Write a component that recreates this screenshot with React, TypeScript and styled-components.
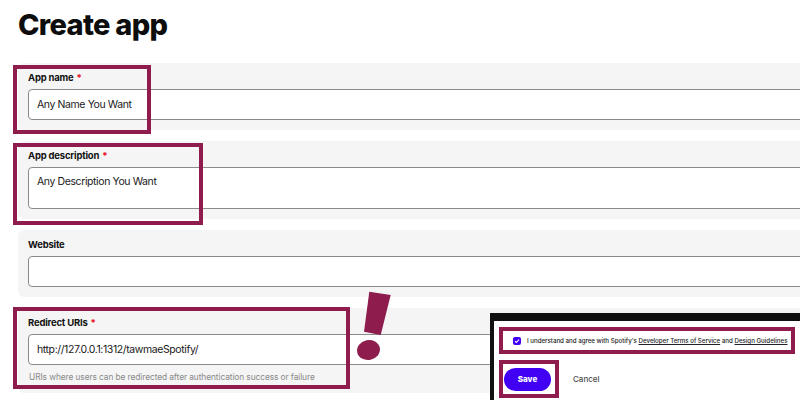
import * as React from 'react'
import styled, { createGlobalStyle } from 'styled-components'

const maroon = '#8e1c4c'
const violet = '#4100f4'

const GlobalStyle = createGlobalStyle`
  html, body {
    margin: 0;
    padding: 0;
    background: #ffffff;
    overflow: hidden;
  }
  body {
    font-family: Inter, 'Noto Sans', 'DejaVu Sans', sans-serif;
    color: #121212;
  }
`

const Page = styled.div`
  position: relative;
  width: 800px;
  height: 400px;
  overflow: hidden;
`

const Title = styled.h1`
  margin: 0;
  padding: 8px 0 0 18px;
  font-size: 29px;
  line-height: 34px;
  font-weight: 800;
  letter-spacing: -0.7px;
  color: #0d0d0d;
`

const Form = styled.div`
  display: flex;
  flex-direction: column;
  gap: 11px;
  margin: 21px -60px 0 18px;
`

const Panel = styled.div`
  position: relative;
  display: flex;
  flex-direction: column;
  background: #f5f5f5;
  border-radius: 6px;
  padding: 8px 10px 10px;
`

const Label = styled.label`
  font-size: 9.5px;
  line-height: 14px;
  font-weight: 700;
  letter-spacing: -0.2px;
  color: #121212;
  margin-bottom: 4px;
`

const Required = styled.span`
  color: #e91429;
  margin-left: 3px;
`

const TextInput = styled.div<{ $tall?: boolean }>`
  box-sizing: border-box;
  height: ${({ $tall }) => ($tall ? '42px' : '31px')};
  background: #ffffff;
  border: 1px solid #8a8a8a;
  border-radius: 4px;
  padding: 0 8px;
  display: flex;
  align-items: ${({ $tall }) => ($tall ? 'flex-start' : 'center')};
  padding-top: ${({ $tall }) => ($tall ? '7px' : '0')};
  font-size: 10.5px;
  letter-spacing: -0.4px;
  line-height: 14px;
  color: #1a1a1a;
`

const Helper = styled.div`
  margin-top: 6px;
  padding-left: 1px;
  font-size: 8.4px;
  letter-spacing: -0.1px;
  line-height: 12px;
  color: #8a8a8a;
`

const Highlight = styled.div<{ $left: number; $top: number; $w: number; $h: number }>`
  position: absolute;
  left: ${({ $left }) => $left}px;
  top: ${({ $top }) => $top}px;
  width: ${({ $w }) => $w}px;
  height: ${({ $h }) => $h}px;
  box-sizing: border-box;
  border: 4px solid ${maroon};
  pointer-events: none;
`

const Bang = styled.svg`
  position: absolute;
  left: 355px;
  top: 288px;
  width: 40px;
  height: 76px;
`

const ConsentWindow = styled.div`
  position: absolute;
  left: 490px;
  top: 313px;
  right: 0;
  bottom: 0;
  background: #ffffff;
  border-top: 8px solid #111111;
  border-left: 4px solid #111111;
  padding: 6px 5px 0 5px;
  display: flex;
  flex-direction: column;
  gap: 6px;
`

const TermsBox = styled.div`
  box-sizing: border-box;
  width: 296px;
  height: 27px;
  border: 4px solid ${maroon};
  display: flex;
  align-items: center;
  gap: 6px;
  padding-left: 10px;
  font-size: 6.2px;
  letter-spacing: -0.02px;
  font-weight: 500;
  color: #222222;
  white-space: nowrap;
`

const Check = styled.span`
  width: 8px;
  height: 8px;
  border-radius: 2px;
  background: ${violet};
  display: flex;
  align-items: center;
  justify-content: center;
  flex: none;
`

const TermsLink = styled.span`
  text-decoration: underline;
  text-underline-offset: 1px;
`

const Actions = styled.div`
  display: flex;
  align-items: center;
`

const SaveBox = styled.div`
  box-sizing: border-box;
  width: 60px;
  height: 38px;
  border: 4px solid ${maroon};
  padding-left: 1px;
  display: flex;
  align-items: center;
`

const SaveButton = styled.button`
  width: 47px;
  height: 23px;
  border: none;
  border-radius: 12px;
  background: ${violet};
  color: #ffffff;
  font-family: inherit;
  font-size: 8px;
  font-weight: 800;
  padding: 0;
`

const CancelButton = styled.span`
  margin-left: 14px;
  font-size: 8px;
  font-weight: 500;
  color: #4d4d4d;
`

export default function App() {
  return (
    <Page>
      <GlobalStyle />
      <Title>Create app</Title>
      <Form>
        <Panel>
          <Label>
            App name<Required>*</Required>
          </Label>
          <TextInput>Any Name You Want</TextInput>
          <Highlight $left={-5} $top={2} $w={138} $h={69} />
        </Panel>
        <Panel>
          <Label>
            App description<Required>*</Required>
          </Label>
          <TextInput $tall>Any Description You Want</TextInput>
          <Highlight $left={-5} $top={2} $w={190} $h={82} />
        </Panel>
        <Panel>
          <Label>Website</Label>
          <TextInput />
        </Panel>
        <Panel>
          <Label>
            Redirect URIs<Required>*</Required>
          </Label>
          <TextInput>http://127.0.0.1:1312/tawmaeSpotify/</TextInput>
          <Helper>URIs where users can be redirected after authentication success or failure</Helper>
          <Highlight $left={-5} $top={-1} $w={337} $h={82} />
        </Panel>
      </Form>

      <Bang viewBox="0 0 40 76">
        <polygon points="14.3,3.7 35.7,7 25.7,47 9,43.7" fill={maroon} />
        <ellipse cx="13.5" cy="62" rx="11.5" ry="10" transform="rotate(-12 13.5 62)" fill={maroon} />
      </Bang>

      <ConsentWindow>
        <TermsBox>
          <Check>
            <svg width="6" height="6" viewBox="0 0 6 6">
              <path d="M1 3.1 L2.4 4.5 L5 1.6" stroke="#fff" strokeWidth="1.1" fill="none" />
            </svg>
          </Check>
          <span>
            I understand and agree with Spotify's <TermsLink>Developer Terms of Service</TermsLink> and{' '}
            <TermsLink>Design Guidelines</TermsLink>
          </span>
        </TermsBox>
        <Actions>
          <SaveBox>
            <SaveButton>Save</SaveButton>
          </SaveBox>
          <CancelButton>Cancel</CancelButton>
        </Actions>
      </ConsentWindow>
    </Page>
  )
}
